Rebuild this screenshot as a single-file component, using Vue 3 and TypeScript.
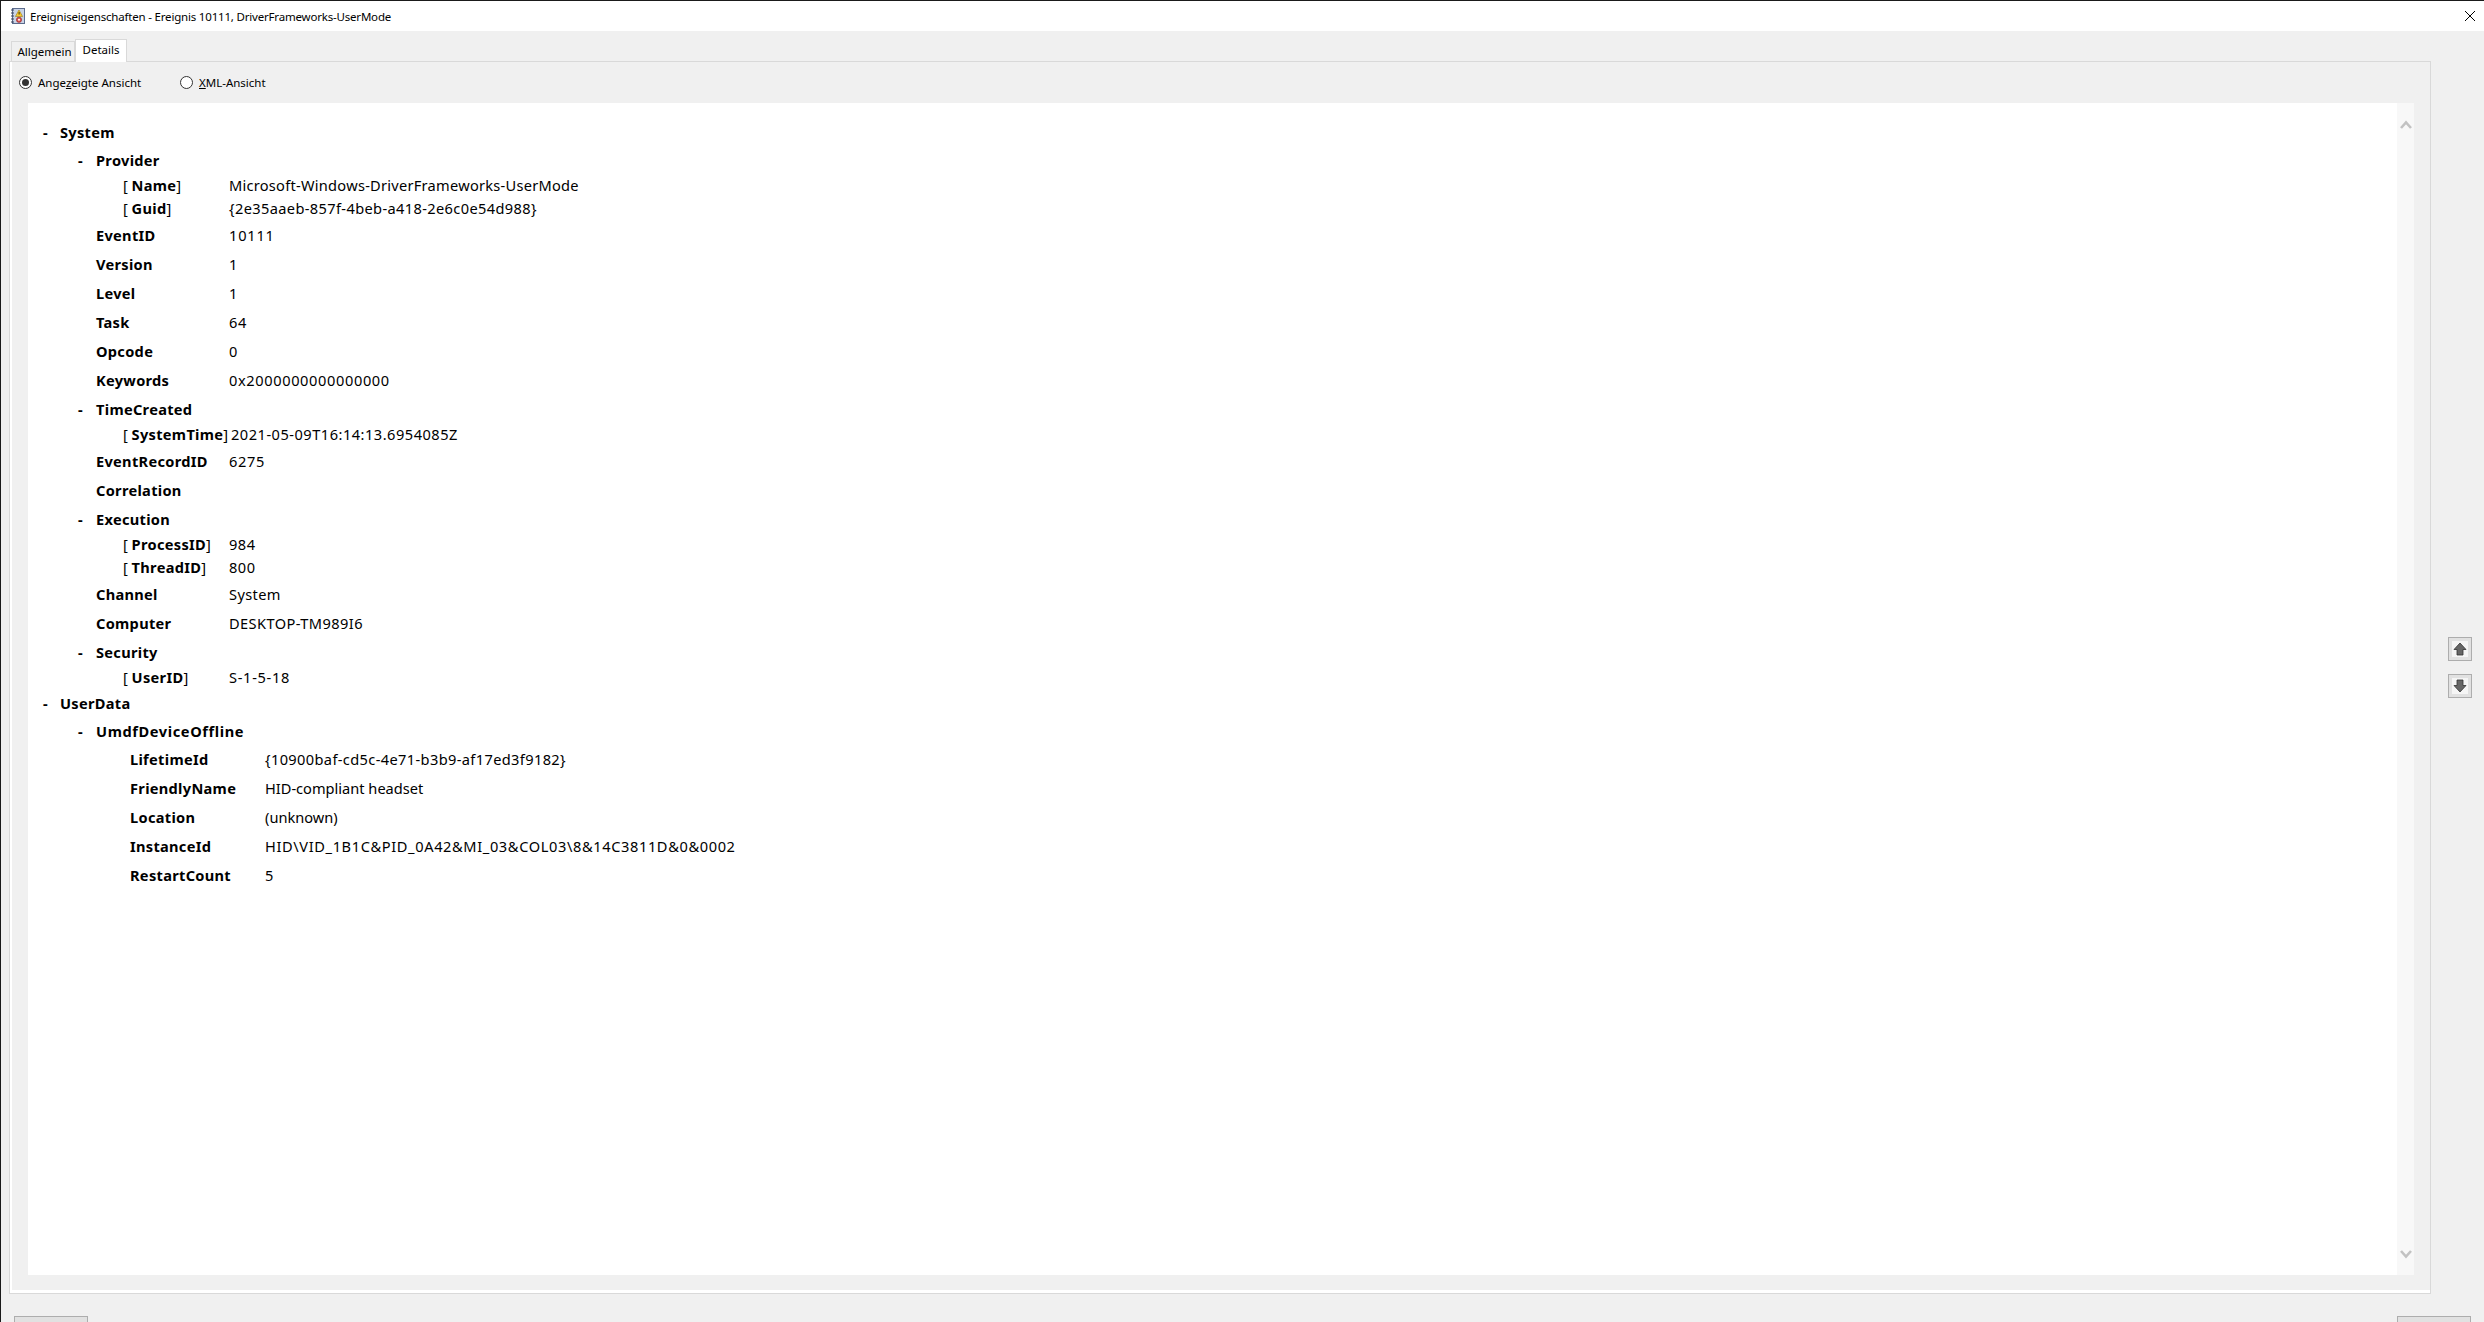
<script setup lang="ts">
interface Row {
  kind: 'head' | 'field' | 'attr' | 'data'
  level?: number
  label: string
  value?: string
  cls?: string
  vc?: string
}

const rows: Row[] = [
  { kind: 'head', level: 0, label: 'System' },
  { kind: 'head', level: 1, label: 'Provider' },
  { kind: 'attr', label: 'Name', value: 'Microsoft-Windows-DriverFrameworks-UserMode', cls: 'first', vc: 's2' },
  { kind: 'attr', label: 'Guid', value: '{2e35aaeb-857f-4beb-a418-2e6c0e54d988}', cls: 'last', vc: 's3' },
  { kind: 'field', label: 'EventID', value: '10111', vc: 's8' },
  { kind: 'field', label: 'Version', value: '1' },
  { kind: 'field', label: 'Level', value: '1' },
  { kind: 'field', label: 'Task', value: '64', vc: 's6' },
  { kind: 'field', label: 'Opcode', value: '0' },
  { kind: 'field', label: 'Keywords', value: '0x2000000000000000', vc: 's6' },
  { kind: 'head', level: 1, label: 'TimeCreated' },
  { kind: 'attr', label: 'SystemTime', value: '2021-05-09T16:14:13.6954085Z', cls: 'first last tight', vc: 's5' },
  { kind: 'field', label: 'EventRecordID', value: '6275', vc: 's6' },
  { kind: 'field', label: 'Correlation' },
  { kind: 'head', level: 1, label: 'Execution' },
  { kind: 'attr', label: 'ProcessID', value: '984', cls: 'first', vc: 's5' },
  { kind: 'attr', label: 'ThreadID', value: '800', cls: 'last', vc: 's5' },
  { kind: 'field', label: 'Channel', value: 'System', vc: 's3' },
  { kind: 'field', label: 'Computer', value: 'DESKTOP-TM989I6', vc: 's4' },
  { kind: 'head', level: 1, label: 'Security' },
  { kind: 'attr', label: 'UserID', value: 'S-1-5-18', cls: 'first last', vc: 's7' },
  { kind: 'head', level: 0, label: 'UserData' },
  { kind: 'head', level: 1, label: 'UmdfDeviceOffline', cls: 'before-data' },
  { kind: 'data', label: 'LifetimeId', value: '{10900baf-cd5c-4e71-b3b9-af17ed3f9182}', vc: 's3' },
  { kind: 'data', label: 'FriendlyName', value: 'HID-compliant headset' },
  { kind: 'data', label: 'Location', value: '(unknown)' },
  { kind: 'data', label: 'InstanceId', value: 'HID\\VID_1B1C&PID_0A42&MI_03&COL03\\8&14C3811D&0&0002', vc: 's6' },
  { kind: 'data', label: 'RestartCount', value: '5' },
]
</script>

<template>
  <div class="window">
    <header class="titlebar">
      <svg class="app-icon" width="16" height="16" viewBox="0 0 16 16">
        <rect x="2.5" y="0.5" width="12" height="15" fill="#c9d3e6" stroke="#5b6b8c" />
        <path d="M1 2h3M1 5h3M1 8h3M1 11h3M1 14h3" stroke="#39435c" stroke-width="1" />
        <path d="M9 2l3.6 6.5H5.4z" fill="#f6c92e" stroke="#9a7a16" stroke-width=".6" />
        <rect x="8.6" y="4" width="1" height="2.5" fill="#3a3000" />
        <circle cx="9" cy="11.8" r="2.6" fill="#d9534f" stroke="#8d2020" stroke-width=".6" />
        <circle cx="9" cy="11.8" r="1" fill="#fff" />
      </svg>
      <span class="title-text">Ereigniseigenschaften - Ereignis 10111, DriverFrameworks-UserMode</span>
      <svg class="close" width="10" height="10" viewBox="0 0 10 10">
        <path d="M0 0l10 10M10 0L0 10" stroke="#000" stroke-width="1" fill="none" />
      </svg>
    </header>

    <main class="body">
      <div class="tabs">
        <div class="tab">Allgemein</div>
        <div class="tab active">Details</div>
      </div>

      <section class="panel">
        <div class="views">
          <label class="radio-item first-radio">
            <span class="radio checked"></span>
            <span>Ange<u>z</u>eigte Ansicht</span>
          </label>
          <label class="radio-item">
            <span class="radio"></span>
            <span><u>X</u>ML-Ansicht</span>
          </label>
        </div>

        <div class="content-wrap">
          <div class="content">
            <div class="tree">
              <div v-for="row in rows" :key="row.label" class="row" :class="[row.kind, row.cls, row.level === 0 ? 'top' : '']">
                <template v-if="row.kind === 'head'">
                  <span class="dash" :class="'lvl' + row.level">-</span>
                  <b class="name" :class="'lvl' + row.level">{{ row.label }}</b>
                </template>
                <template v-else-if="row.kind === 'attr'">
                  <span class="attr-label"><span class="br">[ </span><b>{{ row.label }}</b><span class="br">]</span></span>
                  <span class="val" :class="row.vc">{{ row.value }}</span>
                </template>
                <template v-else>
                  <b class="field-label">{{ row.label }}</b>
                  <span class="val" :class="row.vc">{{ row.value }}</span>
                </template>
              </div>
            </div>
          </div>
          <div class="scrollbar">
            <svg width="12" height="9" viewBox="0 0 12 9"><path d="M1 8l5-5.5L11 8" fill="none" stroke="#c2c2c2" stroke-width="2.6" /></svg>
            <svg width="12" height="9" viewBox="0 0 12 9"><path d="M1 1l5 5.5L11 1" fill="none" stroke="#c2c2c2" stroke-width="2.6" /></svg>
          </div>
        </div>
      </section>

      <aside class="side">
        <button class="arrow" type="button" aria-label="up">
          <svg width="16" height="16" viewBox="0 0 16 16"><path d="M8 2l6 6.5h-3V14H5V8.5H2z" fill="#666" stroke="#333" stroke-width=".8" /></svg>
        </button>
        <button class="arrow" type="button" aria-label="down">
          <svg width="16" height="16" viewBox="0 0 16 16"><path d="M8 14l6-6.5h-3V2H5v5.5H2z" fill="#666" stroke="#333" stroke-width=".8" /></svg>
        </button>
      </aside>
    </main>

    <footer class="footer">
      <div class="btn"></div>
      <div class="btn"></div>
    </footer>
  </div>
</template>

<style>
html, body { margin: 0; padding: 0; background: #f0f0f0; overflow: hidden; }
</style>

<style scoped>
.window {
  width: 2484px;
  height: 1322px;
  box-sizing: border-box;
  border-left: 1px solid #1a1a1a;
  border-top: 1px solid #1a1a1a;
  background: #f0f0f0;
  display: flex;
  flex-direction: column;
  overflow: hidden;
  font-family: "Noto Sans", "Open Sans", sans-serif;
  font-size: 13px;
  color: #000;
}
.titlebar {
  height: 30px;
  flex: none;
  background: #fff;
  display: flex;
  align-items: center;
  padding: 0 9px 0 9px;
}
.app-icon { flex: none; }
.title-text { margin-left: 4px; font-size: 11.5px; flex: 1; letter-spacing: -0.19px; }
.close { flex: none; }

.body {
  height: 1262px;
  flex: none;
  position: relative;
  display: flex;
  flex-direction: column;
  padding: 8px 0 0 8px;
  box-sizing: border-box;
}
.tabs { display: flex; height: 22px; padding-left: 2px; align-items: flex-end; position: relative; z-index: 1; flex: none; }
.tab {
  height: 20px;
  width: 64px;
  box-sizing: border-box;
  border: 1px solid #d9d9d9;
  border-bottom: none;
  font-size: 11.5px;
  line-height: 20px;
  padding-left: 3px;
  text-align: center;
}
.tab.active {
  height: 23px;
  width: 52px;
  background: #fff;
  line-height: 19px;
  margin-bottom: -1px;
  padding-left: 0;
}
.panel {
  width: 2422px;
  height: 1233px;
  box-sizing: border-box;
  border: 1px solid #d9d9d9;
  box-shadow: inset 2px 0 0 #fff, inset 0 -3px 0 #fff;
  padding: 0 16px 0 18px;
  flex: none;
}
.views { height: 40px; margin-bottom: 1px; margin-left: -9px; display: flex; align-items: center; font-size: 11.5px; }
.radio-item { display: flex; align-items: center; }
.first-radio { width: 161px; }
.radio {
  width: 13px;
  height: 13px;
  box-sizing: border-box;
  border: 1px solid #333;
  border-radius: 50%;
  background: #fff;
  margin-right: 6px;
  flex: none;
  position: relative;
}
.radio.checked::after {
  content: "";
  position: absolute;
  left: 2px;
  top: 2px;
  width: 7px;
  height: 7px;
  background: #333;
  border-radius: 50%;
}
.content-wrap { display: flex; height: 1172px; }
.content { flex: 1; background: #fff; padding: 16px 0 0; }
.scrollbar {
  width: 17px;
  background: #f8f8f8;
  display: flex;
  flex-direction: column;
  justify-content: space-between;
  align-items: center;
  padding: 17px 0 16px;
  box-sizing: border-box;
}
.tree { font-size: 14.6px; line-height: 29px; }
.row { display: flex; height: 29px; white-space: nowrap; }
.row.top { height: 27px; line-height: 27px; }
.row.attr { height: 23px; line-height: 23px; padding-left: 95px; }
.row.attr.first { margin-top: -1px; }
.row.attr.last { margin-bottom: 1px; }
.row.before-data { margin-bottom: -1px; }
.row.field { padding-left: 68px; }
.row.data { padding-left: 102px; }
b { letter-spacing: 0.3px; }
.before-data b { letter-spacing: 0.6px; }
.dash { position: absolute; font-weight: 700; }
.dash.lvl0 { margin-left: 15px; }
.dash.lvl1 { margin-left: 50px; }
.name.lvl0 { margin-left: 32px; }
.name.lvl1 { margin-left: 68px; }
.attr-label { width: 106px; flex: none; }
.tight .attr-label { width: 108px; }
.br { font-weight: 400; }
.field-label { width: 133px; flex: none; }
.data .field-label { width: 135px; }
.s2 { letter-spacing: 0.26px; }
.s3 { letter-spacing: 0.37px; }
.s4 { letter-spacing: 0.42px; }
.s5 { letter-spacing: 0.5px; }
.s6 { letter-spacing: 0.62px; }
.s7 { letter-spacing: 0.7px; }
.s8 { letter-spacing: 0.8px; }

.side {
  position: absolute;
  left: 2447px;
  top: 606px;
  display: flex;
  flex-direction: column;
  gap: 13px;
}
.arrow {
  width: 24px;
  height: 24px;
  box-sizing: border-box;
  border: 1px solid #adadad;
  background: #e1e1e1;
  padding: 0;
  display: flex;
  align-items: center;
  justify-content: center;
}
.arrow svg { background: #f5f5f5; }
.footer {
  flex: none;
  display: flex;
  justify-content: space-between;
  padding: 23px 13px 0 13px;
}
.btn {
  width: 74px;
  height: 24px;
  box-sizing: border-box;
  border: 1px solid #adadad;
  background: #e1e1e1;
}
</style>
